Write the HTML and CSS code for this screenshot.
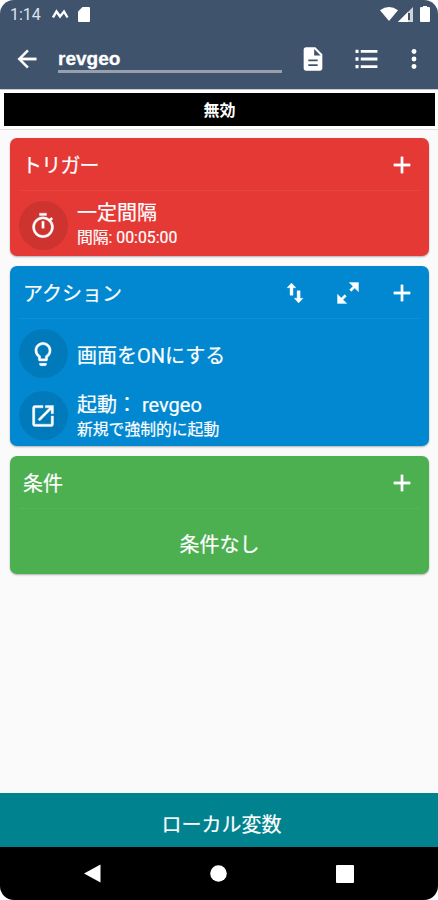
FILE: index.html
```html
<!DOCTYPE html>
<html lang="ja">
<head>
<meta charset="utf-8">
<title>revgeo</title>
<link rel="stylesheet" href="styles.css">
</head>
<body>
<div class="phone">
  <header class="header">
    <div class="status">
      <span class="clock">1:14</span>
      <svg class="status-logo" width="17" height="10" viewBox="0 0 17 10"><path d="M1 8.500 4.500 2.500 8 7.500 12 2.500 15.500 8.500" fill="none" stroke="currentColor" stroke-width="2.400"/></svg>
      <svg class="status-card" width="12" height="15" viewBox="0 0 12 15"><path d="M4.500 0H11q1 0 1 1v13q0 1-1 1H1q-1 0-1-1V4.500z"/></svg>
      <svg class="status-wifi" width="18" height="14" viewBox="0 0 18 14"><path d="M9 14 0 3.200Q9-3.200 18 3.200z"/></svg>
      <svg class="status-signal" width="15" height="15" viewBox="0 0 15 15"><path d="M0 15 15 0v15z" opacity=".75"/><path d="M0 15 10 5v10z"/><path class="signal-cut" d="M10 6h2v7h-2z"/></svg>
      <svg class="status-battery" width="10" height="16" viewBox="0 0 10 16"><path d="M3 0h4v1h2q1 0 1 1v13q0 1-1 1H1q-1 0-1-1V2q0-1 1-1h2z"/></svg>
    </div>
    <div class="toolbar">
      <svg class="icon back" viewBox="0 0 24 24"><path d="M20 11H7.830l5.590-5.590L12 4l-8 8 8 8 1.410-1.410L7.830 13H20z"/></svg>
      <div class="name-field">revgeo</div>
      <svg class="icon document" viewBox="0 0 24 24"><path d="M14 2H6c-1.100 0-2 .9-2 2v16c0 1.100.9 2 2 2h12c1.100 0 2-.9 2-2V8zm2 16H8v-1.500h8zm0-4H8v-1.500h8zm-3-5V3.500L18.500 9z"/></svg>
      <svg class="icon list" viewBox="0 0 24 24"><path d="M3 4h2.600v2.800H3zm4.500.2h14.300v2.400H7.500zM3 10.600h2.600v2.800H3zm4.500.2h14.300v2.400H7.500zM3 17.200h2.600V20H3zm4.500.2h14.300v2.400H7.500z"/></svg>
      <svg class="icon more" viewBox="0 0 24 24"><circle cx="12" cy="5.600" r="2.100"/><circle cx="12" cy="12" r="2.100"/><circle cx="12" cy="18.400" r="2.100"/></svg>
    </div>
  </header>
  <div class="banner"><div class="banner-label">無効</div></div>
  <main class="content">
    <section class="card trigger">
      <div class="card-head">
        <h2>トリガー</h2>
        <svg class="icon" viewBox="0 0 24 24"><path d="M19 13h-6v6h-2v-6H5v-2h6V5h2v6h6z"/></svg>
      </div>
      <div class="row">
        <div class="badge"><svg class="icon" viewBox="0 0 24 24"><path d="M15 1H9v2h6zm-4 13h2V8h-2zm8.030-6.610 1.420-1.420c-.43-.51-.9-.99-1.410-1.410l-1.420 1.420A8.962 8.962 0 0 0 12 4c-4.970 0-9 4.030-9 9s4.020 9 9 9a8.994 8.994 0 0 0 7.030-14.610zM12 20c-3.870 0-7-3.130-7-7s3.130-7 7-7 7 3.130 7 7-3.130 7-7 7z"/></svg></div>
        <div class="text"><div class="title">一定間隔</div><div class="sub">間隔: 00:05:00</div></div>
      </div>
    </section>
    <section class="card action">
      <div class="card-head">
        <h2>アクション</h2>
        <svg class="icon swap" viewBox="0 0 24 24"><path d="M9 3.500 5.200 7.500h2.500V14h2.600V7.500h2.500zM16.400 16.500V10h-2.600v6.500h-2.500l3.800 4 3.800-4z"/></svg>
        <svg class="icon expand" viewBox="0 0 24 24"><path d="M21 11V3h-8l3.290 3.290-2.900 2.900 1.420 1.420 2.900-2.900zM3 13v8h8l-3.290-3.290 2.900-2.900-1.420-1.420-2.900 2.900z"/></svg>
        <svg class="icon" viewBox="0 0 24 24"><path d="M19 13h-6v6h-2v-6H5v-2h6V5h2v6h6z"/></svg>
      </div>
      <div class="row">
        <div class="badge"><svg class="icon" viewBox="0 0 24 24"><path d="M9 21c0 .55.450 1 1 1h4c.55 0 1-.45 1-1v-1H9zm3-19C8.140 2 5 5.140 5 9c0 2.380 1.190 4.470 3 5.740V17c0 .55.450 1 1 1h6c.55 0 1-.45 1-1v-2.260c1.810-1.270 3-3.360 3-5.740 0-3.860-3.140-7-7-7zm2.850 11.100-.85.600V16h-4v-2.300l-.85-.6A4.997 4.997 0 0 1 7 9c0-2.760 2.240-5 5-5s5 2.240 5 5c0 1.630-.8 3.160-2.150 4.100z"/></svg></div>
        <div class="text single"><div class="title">画面をONにする</div></div>
      </div>
      <div class="row">
        <div class="badge"><svg class="icon" viewBox="0 0 24 24"><path d="M19 19H5V5h7V3H5a2 2 0 0 0-2 2v14a2 2 0 0 0 2 2h14c1.100 0 2-.9 2-2v-7h-2zM14 3v2h3.590l-9.830 9.830 1.410 1.410L19 6.410V10h2V3z"/></svg></div>
        <div class="text"><div class="title">起動： revgeo</div><div class="sub">新規で強制的に起動</div></div>
      </div>
    </section>
    <section class="card condition">
      <div class="card-head">
        <h2>条件</h2>
        <svg class="icon" viewBox="0 0 24 24"><path d="M19 13h-6v6h-2v-6H5v-2h6V5h2v6h6z"/></svg>
      </div>
      <div class="empty">条件なし</div>
    </section>
  </main>
  <div class="variables">ローカル変数</div>
  <nav class="navigation">
    <svg width="17" height="19" viewBox="0 0 17 19"><path d="M16.500.5v18L0 9.500z"/></svg>
    <svg width="17" height="17" viewBox="0 0 17 17"><circle cx="8.500" cy="8.500" r="8.300"/></svg>
    <svg width="18" height="18" viewBox="0 0 18 18"><rect width="18" height="18" rx="1"/></svg>
  </nav>
</div>
</body>
</html>
```
FILE: styles.css
```css
* { box-sizing: border-box; }
body {
  margin: 0;
  background: #fff;
  color: #fff;
  font-family: Roboto, "Noto Sans CJK JP", sans-serif;
}
svg { display: block; flex: none; fill: currentColor; }
.phone {
  display: flex;
  flex-direction: column;
  width: 438px;
  height: 900px;
  overflow: hidden;
  border-radius: 14px;
  background: #fafafa;
}
.header { flex: none; height: 89px; background: #40536d; }
.status {
  display: flex;
  align-items: center;
  height: 28px;
  padding: 0 8px 0 10px;
}
.clock { width: 42px; font-size: 16px; color: #dce3ed; }
.status-card { margin-left: 9px; }
.status-wifi { margin-left: auto; }
.status-signal { margin: 0 7px 0 0; }
.signal-cut { fill: #40536d; }
.toolbar { display: flex; align-items: center; height: 61px; padding-left: 13px; }
.icon { width: 28px; height: 28px; }
.back, .card .icon { stroke: currentColor; stroke-width: .3px; }
.name-field {
  width: 224px;
  height: 26px;
  margin: 3px 17px 0 17px;
  border-bottom: 3px solid #999fac;
  font: bold 19px/23px "Liberation Sans", sans-serif;
  -webkit-text-stroke: .3px currentColor;
}
.list { margin-left: 25px; }
.more { margin-left: 20px; }
.banner {
  flex: none;
  height: 41px;
  padding: 3px 3px 4px 4px;
  background: #fff;
  border-bottom: 1px solid #e2e2e2;
  border-top: 1px solid #c9ccd4;
}
.banner-label {
  height: 33px;
  background: #000;
  font-size: 16px;
  font-weight: 700;
  line-height: 35px;
  text-align: center;
}
.content {
  display: flex;
  flex: 1;
  flex-direction: column;
  gap: 10px;
  padding: 8px 9px 0 10px;
}
.card {
  border-radius: 7px;
  box-shadow: 0 1px 2px rgba(0, 0, 0, .3);
}
.trigger { height: 118px; background: #e53935; }
.action { height: 180px; background: #0288d1; }
.condition { height: 118px; background: #4caf50; }
.card-head {
  display: flex;
  align-items: center;
  height: 53px;
  margin: 0 9px;
  padding: 1px 4px 0;
  border-bottom: 1px solid rgba(255, 255, 255, .06);
}
h2 {
  margin: 3px auto 0 0;
  font-size: 20px;
  font-weight: 400;
  line-height: 28px;
}
h2, .title, .sub, .empty, .variables { -webkit-text-stroke: .2px currentColor; }
.trigger h2 { margin-left: -1px; letter-spacing: -.8px; }
.swap { margin-right: 25px; }
.expand { margin-right: 26px; }
.row {
  display: flex;
  align-items: center;
  gap: 9px;
  height: 63px;
  padding: 6px 0 0 9px;
}
.action .row + .row { height: 62px; padding-top: 5px; }
.trigger .row { height: 65px; padding-top: 4px; }
.trigger .text { margin-top: -3px; }
.badge {
  display: grid;
  place-items: center;
  width: 49px;
  height: 49px;
  padding-right: 1px;
  border-radius: 50%;
  background: rgba(0, 0, 0, .1);
}
.single { padding-top: 5px; }
.title { font-size: 20px; line-height: 28px; }
.sub { font-size: 15.8px; line-height: 22px; }
.empty {
  padding-top: 4px;
  font-size: 20px;
  line-height: 65px;
  text-align: center;
}
.variables {
  flex: none;
  height: 54px;
  padding: 4px 0 0 5px;
  background: #00838f;
  font-size: 20px;
  line-height: 56px;
  text-align: center;
}
.navigation {
  display: flex;
  flex: none;
  align-items: center;
  height: 53px;
  padding: 0 84px;
  justify-content: space-between;
  background: #000;
}
```
